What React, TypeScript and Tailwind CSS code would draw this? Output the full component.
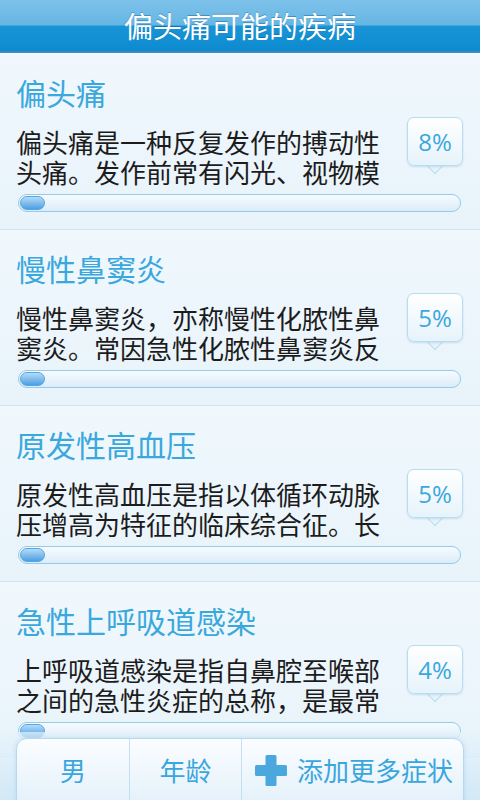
interface Disease { name: string; desc: string; percent: number; }

const diseases: Disease[] = [
  { name: '偏头痛', desc: '偏头痛是一种反复发作的搏动性头痛。发作前常有闪光、视物模', percent: 8 },
  { name: '慢性鼻窦炎', desc: '慢性鼻窦炎，亦称慢性化脓性鼻窦炎。常因急性化脓性鼻窦炎反', percent: 5 },
  { name: '原发性高血压', desc: '原发性高血压是指以体循环动脉压增高为特征的临床综合征。长', percent: 5 },
  { name: '急性上呼吸道感染', desc: '上呼吸道感染是指自鼻腔至喉部之间的急性炎症的总称，是最常', percent: 4 },
];

const cjk = "font-['Noto_Sans_CJK_SC','Noto_Sans',sans-serif]";

function Bubble({ value }: { value: number }) {
  return (
    <div className="relative mt-[-10px] ml-auto mr-[17px] w-[56px] h-[49px] shrink-0">
      <div className="absolute left-1/2 bottom-[-6px] w-[11px] h-[11px] -translate-x-1/2 rotate-45 bg-[#e6f3fb] border-r border-b border-[#b9dcf0]" />
      <div className="relative w-full h-full rounded-[7px] border border-[#b9dcf0] bg-gradient-to-b from-[#ffffff] to-[#e6f3fb] shadow-[0_1px_2px_rgba(100,160,200,0.25)] flex items-center justify-center">
        <span className="font-['Open_Sans',sans-serif] text-[24px] leading-none text-[#3aa8dc]">{value}%</span>
      </div>
    </div>
  );
}

function DiseaseRow({ d }: { d: Disease }) {
  return (
    <div className="h-[176px] border-b border-[#cde4f2] shadow-[0_1px_0_#ffffff] bg-gradient-to-b from-[#f0f8fd] to-[#e8f3fa]">
      <div className={`${cjk} pl-[16px] pt-[20px] text-[30px] leading-[36px] text-[#3aa8dc]`}>{d.name}</div>
      <div className="flex mt-[17px]">
        <p className={`${cjk} ml-[16px] w-[380px] h-[60px] text-[26px] leading-[30px] text-[#1c1c1c]`}>{d.desc}</p>
        <Bubble value={d.percent} />
      </div>
      <div className="ml-[18px] mt-[7px] w-[443px] h-[18px] rounded-full border border-[#93cde9] bg-gradient-to-b from-[#f6fbfe] to-[#dbecf8] p-[1px]">
        <div className="w-[25px] h-full rounded-full border border-[#5aa5df] bg-gradient-to-b from-[#b4dbf8] to-[#4b9fe2]" />
      </div>
    </div>
  );
}

function PlusIcon() {
  return (
    <svg width="32" height="31" viewBox="0 0 32 31" className="mr-[10px]">
      <rect x="10.5" y="0" width="11" height="31" rx="1.5" fill="#4aa8de" />
      <rect x="0" y="10" width="32" height="11" rx="1.5" fill="#4aa8de" />
    </svg>
  );
}

export default function App() {
  return (
    <div className="relative w-full h-[800px] overflow-hidden bg-[#e9f4fb]">
      <div className="h-[53px] border-b-2 border-[#3a8bc3] bg-[linear-gradient(to_bottom,#7dc2ea_0%,#66b6e4_48%,#1894d6_52%,#0e8ad0_100%)] flex items-center justify-center">
        <h1 className={`${cjk} text-[29px] leading-none text-white [text-shadow:0_-1px_0_rgba(0,60,110,0.35)]`}>偏头痛可能的疾病</h1>
      </div>
      <div className="border-t border-[#ffffff]">
        {diseases.map(d => <DiseaseRow key={d.name} d={d} />)}
      </div>

      <div className="absolute left-0 right-0 bottom-0 h-[68px] bg-gradient-to-b from-[#e6f3fb]/70 to-[#d2e9f7]">
        <div className={`${cjk} absolute left-[16px] top-[6px] w-[448px] h-[72px] rounded-[11px] border border-[#b6d9ee] bg-gradient-to-b from-[#fbfdff] to-[#e2f0fa] shadow-[0_0_4px_rgba(120,180,220,0.35)] flex text-[26px] leading-none text-[#3aa6de]`}>
          <div className="w-[112px] h-[62px] flex items-center justify-center">男</div>
          <div className="w-[112px] h-[62px] border-l border-[#c3dff0] flex items-center justify-center">年龄</div>
          <div className="flex-1 h-[62px] border-l border-[#c3dff0] flex items-center pl-[13px]">
            <PlusIcon />
            <span>添加更多症状</span>
          </div>
        </div>
      </div>
    </div>
  );
}
